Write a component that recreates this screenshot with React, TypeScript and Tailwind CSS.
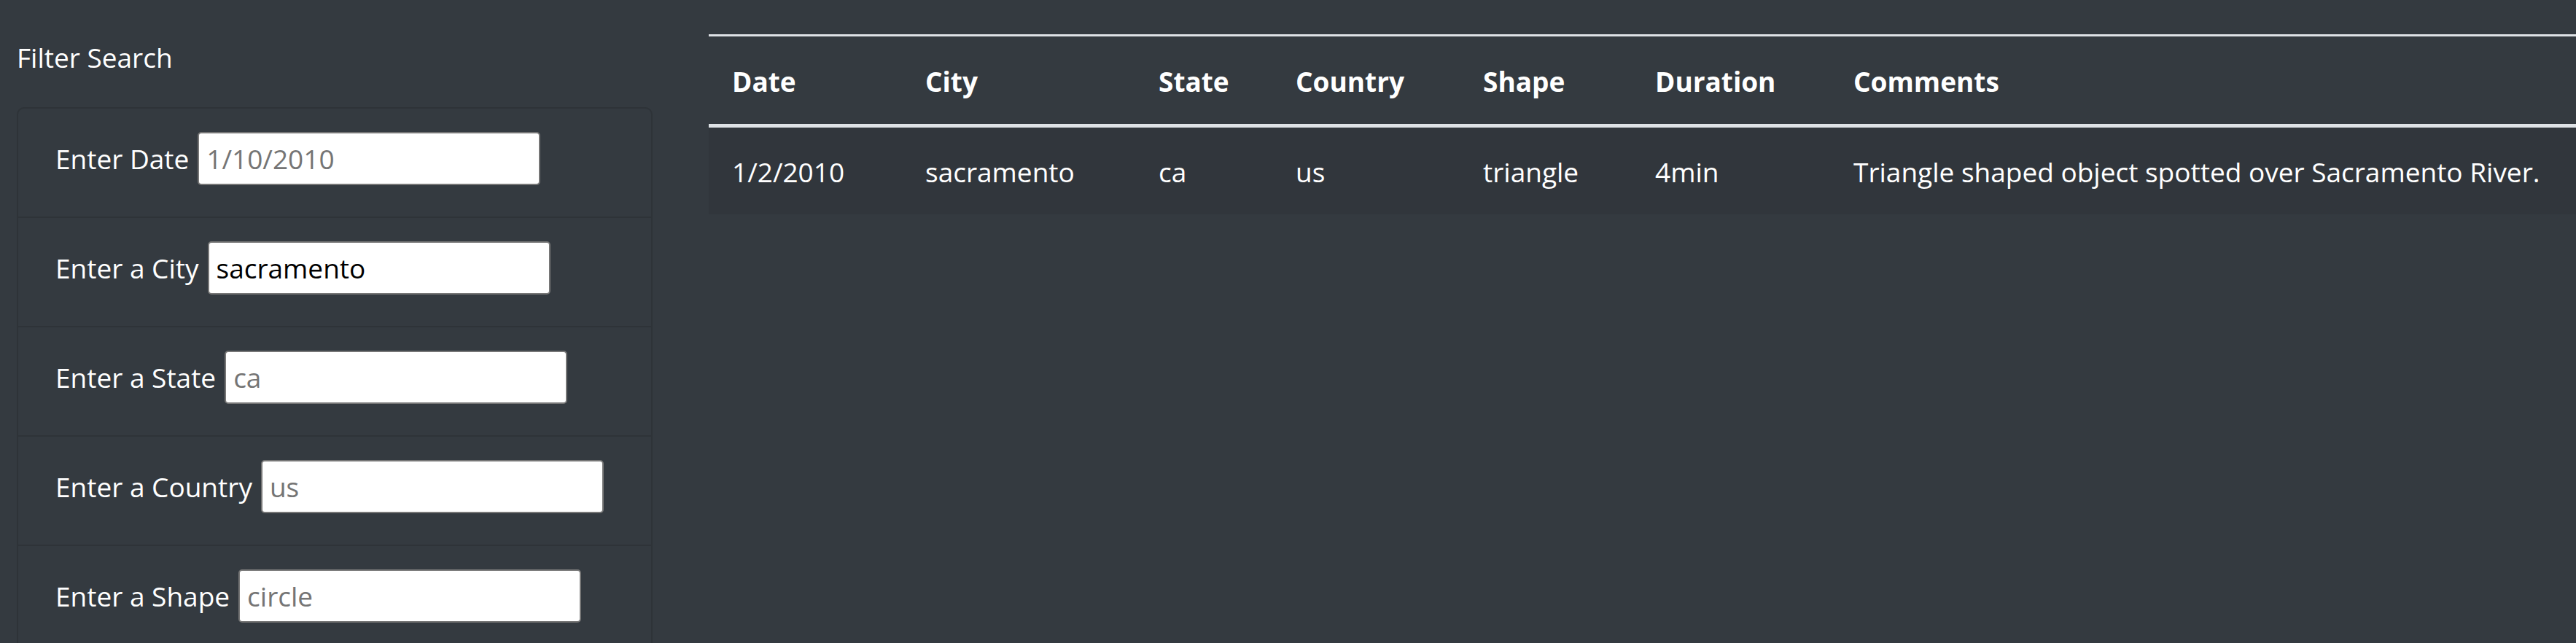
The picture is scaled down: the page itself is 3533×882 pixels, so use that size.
import React from "react";

const filters = [
  { label: "Enter Date", placeholder: "1/10/2010", value: "" },
  { label: "Enter a City", placeholder: "sacramento", value: "sacramento" },
  { label: "Enter a State", placeholder: "ca", value: "" },
  { label: "Enter a Country", placeholder: "us", value: "" },
  { label: "Enter a Shape", placeholder: "circle", value: "" },
];

const columns = [
  { key: "datetime", title: "Date", width: "w-[265px]" },
  { key: "city", title: "City", width: "w-[320px]" },
  { key: "state", title: "State", width: "w-[188px]" },
  { key: "country", title: "Country", width: "w-[257px]" },
  { key: "shape", title: "Shape", width: "w-[236px]" },
  { key: "duration", title: "Duration", width: "w-[272px]" },
  { key: "comments", title: "Comments", width: "" },
];

const rows: Record<string, string>[] = [
  {
    datetime: "1/2/2010",
    city: "sacramento",
    state: "ca",
    country: "us",
    shape: "triangle",
    duration: "4min",
    comments: "Triangle shaped object spotted over Sacramento River.",
  },
];

export default function App() {
  return (
    <div
      className="flex w-[3533px] h-[882px] overflow-hidden bg-[#343a40] text-white"
      style={{ fontFamily: '"Open Sans", "Liberation Sans", sans-serif' }}
    >
      {/* filter column */}
      <aside className="ml-[23px] w-[872px] shrink-0">
        <h5 className="mt-[50px] text-[37px] leading-[57px] font-normal">Filter Search</h5>
        <ul className="mt-[40px] border-2 border-[#2e3338] rounded-[10px]">
          {filters.map((f, i) => (
            <li
              key={f.label}
              className={
                i === 0
                  ? "flex items-center pl-[51px] pt-[32px] pb-[43px]"
                  : "flex items-center pl-[51px] pt-[32px] pb-[43px] border-t-2 border-[#2e3338]"
              }
            >
              <label className="text-[37px] leading-[54px] whitespace-nowrap">{f.label}</label>
              <input
                type="text"
                defaultValue={f.value}
                placeholder={f.placeholder}
                className="ml-[12px] w-[470px] h-[73px] shrink-0 bg-white text-black border-2 border-[#767676] rounded-[5px] pl-[10px] text-[37px] placeholder:text-[#757575] outline-none"
              />
            </li>
          ))}
        </ul>
      </aside>

      {/* results table */}
      <main className="ml-[77px] mt-[47px] flex-1">
        <table className="w-[2600px] table-fixed border-separate border-spacing-0 text-left">
          <thead>
            <tr>
              {columns.map((c) => (
                <th
                  key={c.key}
                  className={`${c.width} pl-[32px] pt-[35px] pb-[31px] text-[37px] leading-[54px] font-bold border-t-[3px] border-b-[5px] border-[#dee2e6]`}
                >
                  {c.title}
                </th>
              ))}
            </tr>
          </thead>
          <tbody>
            {rows.map((r, i) => (
              <tr key={i} className="bg-[#31363c]">
                {columns.map((c) => (
                  <td
                    key={c.key}
                    className="pl-[32px] pt-[34px] pb-[31px] text-[37px] leading-[54px] whitespace-nowrap"
                  >
                    {r[c.key]}
                  </td>
                ))}
              </tr>
            ))}
          </tbody>
        </table>
      </main>
    </div>
  );
}
